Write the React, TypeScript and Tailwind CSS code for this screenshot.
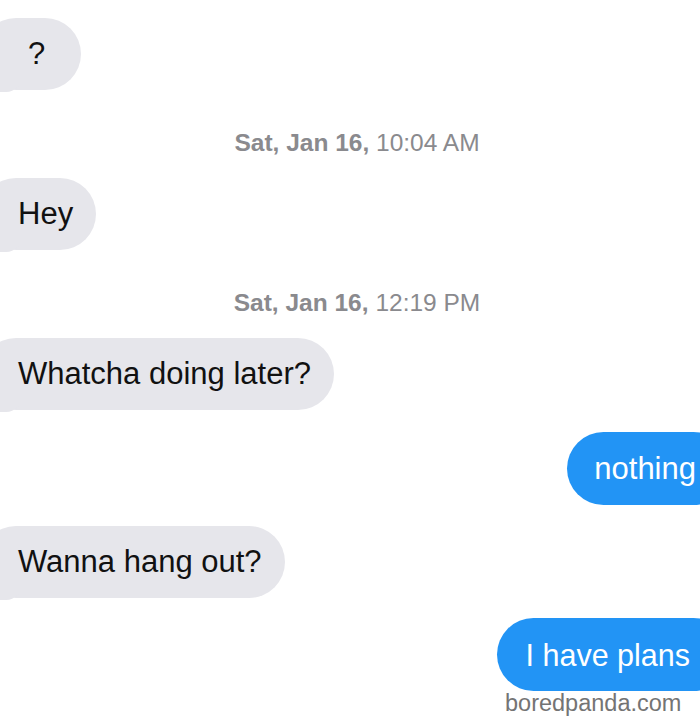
import React from "react";

const font = { fontFamily: '"Liberation Sans", Arial, sans-serif' };

function Gray({ text }: { text: string }) {
  return (
    <div className="relative flex">
      <div className="relative -ml-[20px] h-[72px] flex items-center rounded-full bg-[#e6e6eb] pl-[38px] pr-[23px] text-[31px] text-[#111111]">
        <span className="leading-[36px]">{text}</span>
      </div>
      <div className="absolute left-0 bottom-[-2px] w-[22px] h-[18px] rounded-br-[16px] bg-[#e6e6eb]" />
    </div>
  );
}

function Stamp({ day, time }: { day: string; time: string }) {
  return (
    <div className="flex justify-center pl-[14px] h-[28px] items-center text-[24.5px] text-[#8a8a8e] leading-[28px]">
      <span className="font-semibold">{day}</span>
      <span>&nbsp;{time}</span>
    </div>
  );
}

export default function App() {
  return (
    <div className="relative w-[700px] h-[723px] overflow-hidden bg-white" style={font}>
      <div className="flex flex-col pt-[18px]">
        <div className="relative flex">
          <div className="relative -ml-[20px] h-[72px] w-[101px] flex items-center rounded-full bg-[#e6e6eb] pl-[48px] text-[31px] text-[#111111]">
            <span className="leading-[36px]">?</span>
          </div>
          <div className="absolute left-0 bottom-[-2px] w-[22px] h-[18px] rounded-br-[16px] bg-[#e6e6eb]" />
        </div>
        <div className="mt-[39px]">
          <Stamp day="Sat, Jan 16," time="10:04 AM" />
        </div>
        <div className="mt-[21px]">
          <Gray text="Hey" />
        </div>
        <div className="mt-[39px]">
          <Stamp day="Sat, Jan 16," time="12:19 PM" />
        </div>
        <div className="mt-[21px]">
          <Gray text="Whatcha doing later?" />
        </div>
        <div className="mt-[22px] flex justify-end">
          <div className="-mr-[30px] h-[73px] flex items-center rounded-full bg-[#2294f5] pl-[27px] pr-[34px] text-[31px] text-white">
            <span className="leading-[36px]">nothing</span>
          </div>
        </div>
        <div className="mt-[21px]">
          <Gray text="Wanna hang out?" />
        </div>
        <div className="mt-[20px] flex justify-end">
          <div className="-mr-[30px] h-[73px] flex items-center rounded-full bg-[#2294f5] pl-[29px] pr-[40px] text-[30.5px] text-white">
            <span className="leading-[36px]">I have plans</span>
          </div>
        </div>
      </div>
      <div className="absolute left-[505px] top-[689px] text-[23.5px] leading-[28px] text-[#747474]">
        boredpanda.com
      </div>
    </div>
  );
}
